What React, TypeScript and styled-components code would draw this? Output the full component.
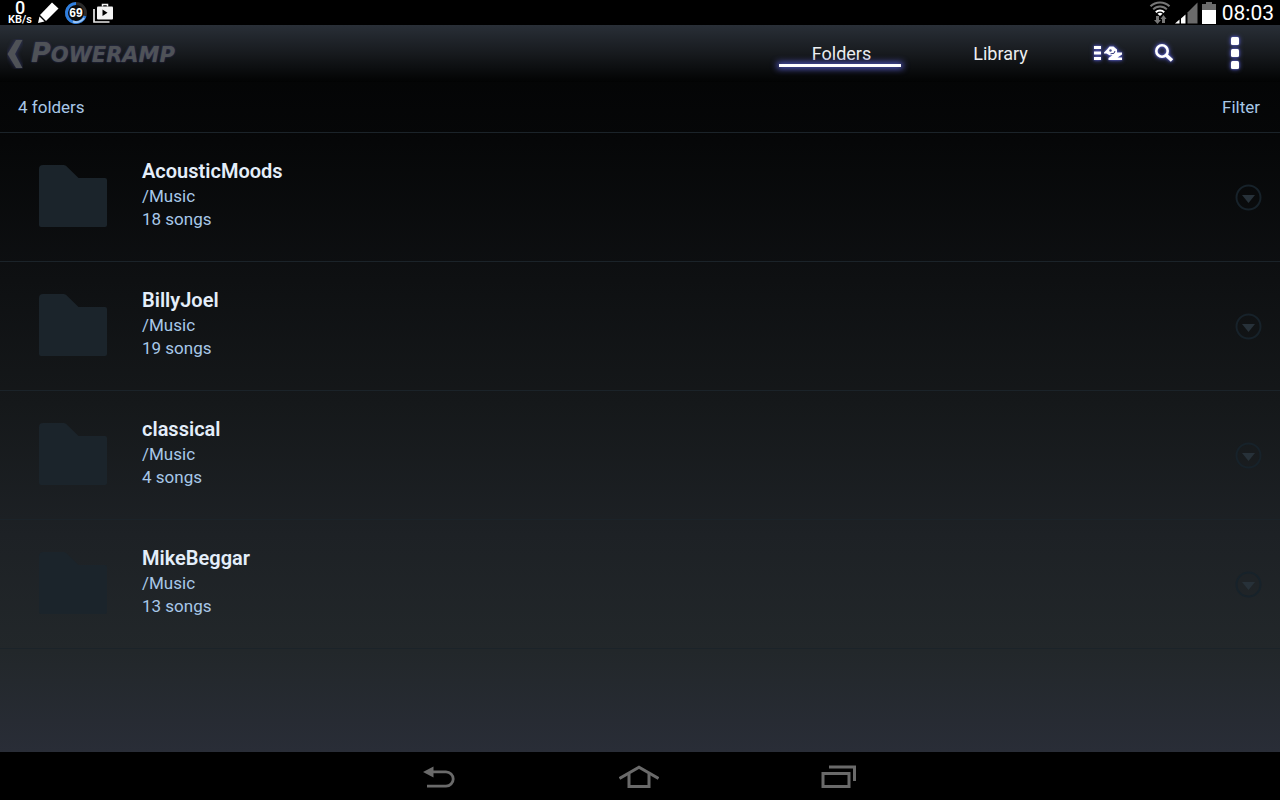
import React from "react";
import styled, { createGlobalStyle } from "styled-components";

const GlobalStyle = createGlobalStyle`
  *, *::before, *::after { box-sizing: border-box; }
  body {
    margin: 0;
    background: #000;
    font-family: Roboto, "Liberation Sans", sans-serif;
  }
  button {
    margin: 0;
    padding: 0;
    border: 0;
    background: none;
    color: inherit;
    font: inherit;
    cursor: pointer;
  }
  a { color: inherit; text-decoration: none; }
  svg { display: block; flex: none; }
`;

const Screen = styled.div`
  display: flex;
  flex-direction: column;
  min-height: 100vh;
`;

const StatusBar = styled.div`
  display: flex;
  align-items: center;
  justify-content: space-between;
  height: 25px;
  padding: 0 6px 0 7px;
  background: #000;
  color: #fff;
`;

const StatusGroup = styled.div<{ $gap: number }>`
  display: flex;
  align-items: center;
  gap: ${(p) => p.$gap}px;
`;

const NetSpeed = styled.div`
  display: flex;
  flex-direction: column;
  align-items: center;
  width: 26px;
`;

const SpeedValue = styled.span`
  font-size: 18px;
  font-weight: 500;
  line-height: 15px;
`;

const SpeedUnit = styled.span`
  font-size: 11px;
  font-weight: 600;
  line-height: 10px;
`;

const Clock = styled.time`
  margin-left: 2px;
  font-size: 21px;
  line-height: 24px;
`;

const Player = styled.div`
  display: flex;
  flex: 1;
  flex-direction: column;
  background: linear-gradient(
    #020303 0,
    #060708 16%,
    #0e1012 35%,
    #15181a 52%,
    #1d2125 70%,
    #22272a 86%,
    #292d37 100%
  );
`;

const Header = styled.header`
  display: flex;
  align-items: stretch;
  justify-content: space-between;
  height: 57px;
  background: linear-gradient(#292f37, #171a1e 50%, #020303);
`;

const Brand = styled.a`
  display: flex;
  align-items: center;
  gap: 8px;
  padding-left: 7px;
  color: #4f5257;
`;

const Wordmark = styled.span`
  display: block;
  font: italic bold 21px/30px "DejaVu Sans", sans-serif;
  text-shadow: 0 0 2px #34386a;

  &::first-letter { font-size: 27px; }
`;

const Tools = styled.div`
  display: flex;
`;

const Tabs = styled.nav`
  display: flex;
`;

const Tab = styled.a<{ $active?: boolean }>`
  display: flex;
  align-items: center;
  justify-content: center;
  position: relative;
  width: 159px;
  color: #eceef0;
  font-size: 18px;
  line-height: 24px;

  &::after {
    content: "";
    display: ${(p) => (p.$active ? "block" : "none")};
    position: absolute;
    right: 20px;
    bottom: 15px;
    left: 17px;
    height: 3px;
    background: #fff;
    box-shadow: 0 0 6px 2px #5055b8;
  }
`;

const ToolButton = styled.button<{ $wide?: boolean }>`
  display: flex;
  align-items: center;
  justify-content: center;
  width: ${(p) => (p.$wide ? 88 : 56)}px;
  padding-bottom: 2px;
  color: #fff;

  svg { filter: drop-shadow(0 0 1px #5a60c8) drop-shadow(0 0 2px #4a4fae); }
`;

const SubHeader = styled.div`
  display: flex;
  align-items: center;
  justify-content: space-between;
  height: 51px;
  padding: 0 20px 0 18px;
  border-bottom: 1px solid #1b2329;
  color: #a8c8e8;
  font-size: 17px;
  line-height: 23px;
`;

const FolderList = styled.ul`
  margin: 0;
  padding: 0;
  list-style: none;
`;

const FolderRow = styled.li`
  display: flex;
  align-items: center;
  height: 129px;
  padding: 0 18px 0 39px;
  border-bottom: 1px solid #1b2329;
`;

const FolderLink = styled.a`
  display: flex;
  flex: 1;
  align-items: center;
  gap: 35px;
  padding-bottom: 2px;
`;

const FolderText = styled.span`
  display: flex;
  flex-direction: column;
  padding-bottom: 4px;
`;

const FolderName = styled.span`
  color: #e4eefa;
  font-size: 20px;
  font-weight: 600;
  line-height: 27px;
`;

const FolderMeta = styled.span`
  color: #a8c8e8;
  font-size: 17px;
  line-height: 23px;
`;

const NavBar = styled.nav`
  display: flex;
  justify-content: center;
  height: 48px;
  padding: 2px 2px 0 0;
  background: #000;
`;

const NavButton = styled.button`
  display: flex;
  align-items: center;
  justify-content: center;
  width: 200px;
`;

const PencilIcon = () => (
  <svg width="21" height="21" viewBox="0 0 21 21" fill="#fff" aria-hidden="true">
    <path d="M14 .5 20.500 6.500 8 19 2 13z" />
    <path d="M1.500 14.500 6.500 19.500 0 21z" />
  </svg>
);

const BatteryRing = () => (
  <svg width="24" height="24" viewBox="0 0 24 24" role="img" aria-label="69 percent">
    <circle cx="12" cy="12" r="9.500" fill="#0a0a0a" stroke="#2b2b2b" strokeWidth="3" />
    <path d="M12 2.500A9.500 9.500 0 1 0 21 15" fill="none" stroke="#2f7fe0" strokeWidth="3" />
    <path d="M9 20.500A9.500 9.500 0 0 0 20 17" fill="none" stroke="#9cc6f4" strokeWidth="2" />
    <text
      x="12"
      y="16"
      fill="#fff"
      fontFamily="Liberation Sans, sans-serif"
      fontSize="12"
      fontWeight="700"
      textAnchor="middle"
    >
      69
    </text>
  </svg>
);

const StoreIcon = () => (
  <svg width="21" height="20" viewBox="0 0 21 20" aria-hidden="true">
    <path d="M1 6v13h15.500" fill="none" stroke="#e8e8e8" strokeWidth="1.700" />
    <path d="M9.500 3.500V1.500h5v2" fill="none" stroke="#f4f4f4" strokeWidth="1.500" />
    <rect x="4" y="3.500" width="16" height="13" rx="1" fill="#f4f4f4" />
    <path d="M9.500 6.500v6.500l5-3.300z" fill="#000" />
  </svg>
);

const WifiIcon = () => (
  <svg width="22" height="23" viewBox="0 0 22 23" aria-hidden="true">
    <g fill="none" strokeWidth="2">
      <path d="M1.500 5.300a13.500 13.500 0 0 1 19 0" stroke="#777" />
      <path d="M4.200 8.400a9.500 9.500 0 0 1 13.600 0" stroke="#777" />
      <path d="M6.800 11.200a6 6 0 0 1 8.400 0" stroke="#fff" />
    </g>
    <path d="M8.500 12.800a4 4 0 0 1 5 0L11 15z" fill="#fff" />
    <path d="M7 15h3v4h2l-3.500 4L5 19h2z" fill="#777" />
    <path d="M13 22h3v-4h1.500L14.500 14 11.500 18H13z" fill="#777" />
  </svg>
);

const SignalIcon = () => (
  <svg width="23" height="22" viewBox="0 0 23 22" aria-hidden="true">
    <path d="M0 21.500 4.500 17.500V21.500zM6 16.500 10.500 12.500V21.500H6z" fill="#fff" />
    <path d="M12.500 10.500 22.500 .5V21.500h-10z" fill="#6b6b6b" />
  </svg>
);

const BatteryIcon = () => (
  <svg width="14" height="22" viewBox="0 0 14 22" aria-hidden="true">
    <path d="M4 0h6v2h4v6H0V2h4z" fill="#6b6b6b" />
    <path d="M0 8h14v14H0z" fill="#fff" />
  </svg>
);

const ChevronIcon = () => (
  <svg width="16" height="30" viewBox="0 0 16 30" aria-hidden="true">
    <path
      d="M9 1h6.500L8 15l7.500 14H9L.5 15z"
      fill="#4f5257"
      style={{ filter: "drop-shadow(0 0 2px #34386a)" }}
    />
  </svg>
);

const ModeIcon = () => (
  <svg width="30" height="16" viewBox="0 0 30 16" fill="#fff" aria-hidden="true">
    <path d="M1 1h7v3H1zM1 6.500h7v3H1zM1 12h7v3H1z" />
    <path d="M11 7.500 14 4.500 16.500 1.500h4L24 4.500v3h5v2L24.500 12.500H29V15H15.500v-2l4-2.800H16.500L13.500 8.500H11z" />
    <circle cx="17.500" cy="5.500" r="1.200" fill="#4a4f92" />
    <path d="M17.500 8.800 21 8.300 22 6" fill="none" stroke="#3a3f80" strokeWidth="1" />
  </svg>
);

const SearchIcon = () => (
  <svg width="20" height="20" viewBox="0 0 20 20" aria-hidden="true">
    <circle cx="8" cy="8" r="5.700" fill="none" stroke="#fff" strokeWidth="2.600" />
    <path d="m12 12 6 5.500" fill="none" stroke="#fff" strokeWidth="3.500" />
  </svg>
);

const MoreIcon = () => (
  <svg width="12" height="34" viewBox="0 0 12 34" fill="#fff" aria-hidden="true">
    <rect x="1" y="1" width="8" height="8" rx="1.500" />
    <rect x="1" y="13" width="8" height="8" rx="1.500" />
    <rect x="1" y="25" width="8" height="8" rx="1.500" />
  </svg>
);

const FolderIcon = () => (
  <svg width="68" height="62" viewBox="0 0 68 62" aria-hidden="true">
    <path
      d="M4 0h20.500c1.500 0 2.500.8 3.500 1.700L39.500 13H66a2 2 0 0 1 2 2v45a2 2 0 0 1-2 2H2a2 2 0 0 1-2-2V4a4 4 0 0 1 4-4z"
      fill="#1b242b"
    />
  </svg>
);

const ExpandIcon = () => (
  <svg width="27" height="27" viewBox="0 0 27 27" aria-hidden="true">
    <circle cx="13.500" cy="13.500" r="12" fill="none" stroke="#17222a" strokeWidth="2" />
    <path d="M7 11h13l-6.500 8z" fill="#273139" />
  </svg>
);

const BackIcon = () => (
  <svg width="32" height="22" viewBox="0 0 32 22" aria-hidden="true">
    <path d="M0 6 10.500 .5v11z" fill="#6a6a6a" />
    <path d="M10 5.800h13a7.200 7.200 0 0 1 0 14.400H4" fill="none" stroke="#6a6a6a" strokeWidth="2.800" />
  </svg>
);

const HomeIcon = () => (
  <svg width="40" height="24" viewBox="0 0 40 24" fill="none" stroke="#6a6a6a" aria-hidden="true">
    <path d="M.5 13.500 20 2.200l19.500 11.300" strokeWidth="3" />
    <path d="M10 9v12.500h20V9" strokeWidth="3" />
  </svg>
);

const RecentsIcon = () => (
  <svg width="36" height="24" viewBox="0 0 36 24" fill="none" stroke="#6a6a6a" strokeWidth="3" aria-hidden="true">
    <path d="M8 2h25.500v14" />
    <path d="M2 8.500h26v13H2z" />
  </svg>
);

const folders = [
  { name: "AcousticMoods", path: "/Music", songs: 18 },
  { name: "BillyJoel", path: "/Music", songs: 19 },
  { name: "classical", path: "/Music", songs: 4 },
  { name: "MikeBeggar", path: "/Music", songs: 13 },
];

export default function App() {
  return (
    <Screen>
      <GlobalStyle />
      <StatusBar>
        <StatusGroup $gap={5}>
          <NetSpeed>
            <SpeedValue>0</SpeedValue>
            <SpeedUnit>KB/s</SpeedUnit>
          </NetSpeed>
          <PencilIcon />
          <BatteryRing />
          <StoreIcon />
        </StatusGroup>
        <StatusGroup $gap={4}>
          <WifiIcon />
          <SignalIcon />
          <BatteryIcon />
          <Clock>08:03</Clock>
        </StatusGroup>
      </StatusBar>

      <Player>
        <Header>
          <Brand href="#player">
            <ChevronIcon />
            <Wordmark>POWERAMP</Wordmark>
          </Brand>
          <Tools>
            <Tabs aria-label="Browse">
              <Tab href="#folders" $active aria-current="page">Folders</Tab>
              <Tab href="#library">Library</Tab>
            </Tabs>
            <ToolButton aria-label="List mode"><ModeIcon /></ToolButton>
            <ToolButton aria-label="Search"><SearchIcon /></ToolButton>
            <ToolButton $wide aria-label="More options"><MoreIcon /></ToolButton>
          </Tools>
        </Header>

        <SubHeader>
          <span>4 folders</span>
          <button type="button">Filter</button>
        </SubHeader>

        <FolderList>
          {folders.map((folder) => (
            <FolderRow key={folder.name}>
              <FolderLink href={`#${folder.name}`}>
                <FolderIcon />
                <FolderText>
                  <FolderName>{folder.name}</FolderName>
                  <FolderMeta>{folder.path}</FolderMeta>
                  <FolderMeta>{folder.songs} songs</FolderMeta>
                </FolderText>
              </FolderLink>
              <button type="button" aria-label={`Options for ${folder.name}`}>
                <ExpandIcon />
              </button>
            </FolderRow>
          ))}
        </FolderList>
      </Player>

      <NavBar aria-label="System">
        <NavButton aria-label="Back"><BackIcon /></NavButton>
        <NavButton aria-label="Home"><HomeIcon /></NavButton>
        <NavButton aria-label="Recent apps"><RecentsIcon /></NavButton>
      </NavBar>
    </Screen>
  );
}
